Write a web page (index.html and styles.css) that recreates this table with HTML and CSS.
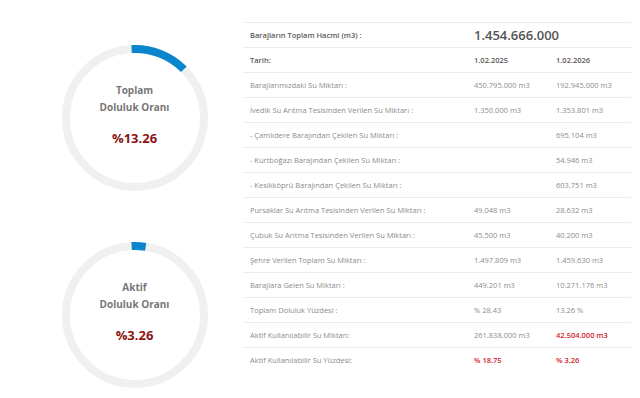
FILE: index.html
```html
<!DOCTYPE html>
<html lang="tr">
<head>
<meta charset="utf-8">
<link rel="stylesheet" href="styles.css">
</head>
<body>
<div class="page">
  <div class="gauges">
    <div class="gauge gauge-first">
      <svg class="ring" width="150" height="150" viewBox="0 0 150 150">
        <circle class="track" cx="75" cy="75" r="69"/>
        <circle class="bar" cx="75" cy="75" r="69" style="stroke-dasharray: 57.5 433.5"/>
      </svg>
      <div class="gauge-text">
        <div class="gauge-label">Toplam<br>Doluluk Oranı</div>
        <div class="gauge-value">%13.26</div>
      </div>
    </div>
    <div class="gauge">
      <svg class="ring" width="150" height="150" viewBox="0 0 150 150">
        <circle class="track" cx="75" cy="75" r="69"/>
        <circle class="bar" cx="75" cy="75" r="69" style="stroke-dasharray: 14.1 433.5"/>
      </svg>
      <div class="gauge-text">
        <div class="gauge-label">Aktif<br>Doluluk Oranı</div>
        <div class="gauge-value">%3.26</div>
      </div>
    </div>
  </div>
  <div class="table">
    <div class="row head"><span>Barajların Toplam Hacmi (m3) :</span><span class="total">1.454.666.000</span></div>
    <div class="row head"><span>Tarih:</span><span>1.02.2025</span><span>1.02.2026</span></div>
    <div class="row"><span>Barajlarımızdaki Su Miktarı :</span><span>450.795.000 m3</span><span>192.945.000 m3</span></div>
    <div class="row"><span>İvedik Su Arıtma Tesisinden Verilen Su Miktarı :</span><span>1.350.000 m3</span><span>1.353.801 m3</span></div>
    <div class="row"><span>- Çamlıdere Barajından Çekilen Su Miktarı :</span><span></span><span>695.104 m3</span></div>
    <div class="row"><span>- Kurtboğazı Barajından Çekilen Su Miktarı :</span><span></span><span>54.946 m3</span></div>
    <div class="row"><span>- Kesikköprü Barajından Çekilen Su Miktarı :</span><span></span><span>603.751 m3</span></div>
    <div class="row"><span>Pursaklar Su Arıtma Tesisinden Verilen Su Miktarı :</span><span>49.048 m3</span><span>28.632 m3</span></div>
    <div class="row"><span>Çubuk Su Arıtma Tesisinden Verilen Su Miktarı :</span><span>45.500 m3</span><span>40.200 m3</span></div>
    <div class="row"><span>Şehre Verilen Toplam Su Miktarı :</span><span>1.497.809 m3</span><span>1.459.630 m3</span></div>
    <div class="row"><span>Barajlara Gelen Su Miktarı :</span><span>449.201 m3</span><span>10.271.176 m3</span></div>
    <div class="row"><span>Toplam Doluluk Yüzdesi :</span><span>% 28.43</span><span>13.26 %</span></div>
    <div class="row"><span>Aktif Kullanılabilir Su Miktarı:</span><span>261.838.000 m3</span><span class="red">42.504.000 m3</span></div>
    <div class="row last"><span>Aktif Kullanılabilir Su Yüzdesi:</span><span class="red">% 18.75</span><span class="red">% 3.26</span></div>
  </div>
</div>
</body>
</html>
```

FILE: styles.css
```css
html, body {
  margin: 0;
  padding: 0;
  background: #fff;
}
body {
  font-family: "Open Sans", "DejaVu Sans", sans-serif;
  width: 640px;
  height: 398px;
  overflow: hidden;
}
.page {
  display: flex;
  align-items: flex-start;
}
.gauges {
  width: 243px;
  box-sizing: border-box;
  padding-left: 26px;
  padding-top: 43px;
  display: flex;
  flex-direction: column;
  align-items: center;
  gap: 47px;
}
.gauge {
  display: grid;
  width: 150px;
  height: 150px;
}
.gauge > * {
  grid-area: 1 / 1;
}
.ring {
  display: block;
}
.track {
  fill: none;
  stroke: #f0f0f0;
  stroke-width: 8;
}
.bar {
  fill: none;
  stroke: #0a86cc;
  stroke-width: 8;
  transform: rotate(-92.8deg);
  transform-origin: 75px 75px;
}
.gauge-text {
  display: flex;
  flex-direction: column;
  align-items: center;
  justify-content: center;
  text-align: center;
  padding-bottom: 7px;
}
.gauge-label {
  font-size: 10px;
  font-weight: 700;
  color: #777;
  line-height: 17px;
}
.gauge-value {
  margin-top: 14px;
  font-size: 13px;
  font-weight: 700;
  color: #8a1414;
  line-height: 17px;
}
.table {
  width: 388px;
  margin-top: 22px;
  display: flex;
  flex-direction: column;
}
.row {
  display: grid;
  grid-template-columns: 224px 82px 82px;
  height: 25px;
  box-sizing: border-box;
  border-top: 1px solid #ececec;
  align-items: center;
  font-size: 7.5px;
  color: #8c8c8c;
}
.row > span {
  padding-left: 7px;
  white-space: nowrap;
}
.row.head {
  font-weight: 600;
  color: #5a5a5a;
}
.row .total {
  grid-column: 2 / 4;
  font-size: 13px;
  font-weight: 600;
  color: #555;
}
.row .red {
  color: #d0222b;
  font-weight: 600;
}
```
